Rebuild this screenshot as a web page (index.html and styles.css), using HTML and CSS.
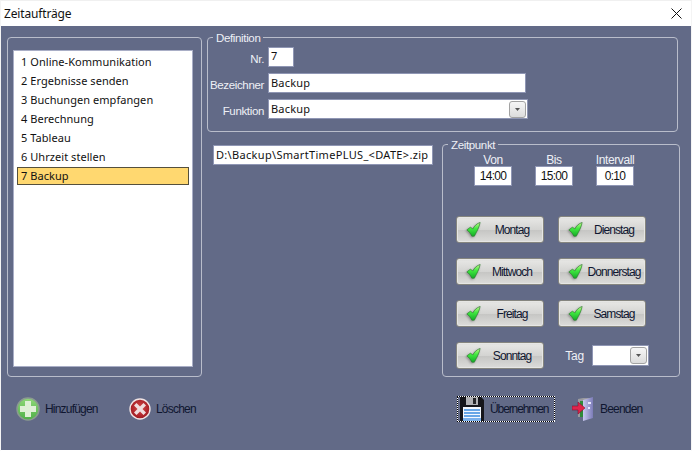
FILE: index.html
```html
<!DOCTYPE html>
<html lang="de">
<head>
<meta charset="utf-8">
<title>Zeitaufträge</title>
<link rel="stylesheet" href="styles.css">
</head>
<body>
<svg class="defs" width="0" height="0">
  <defs>
    <linearGradient id="gCheck" x1="0" y1="0" x2="0" y2="1"><stop offset="0" stop-color="#c0f888"/><stop offset="0.45" stop-color="#40e840"/><stop offset="1" stop-color="#14ac28"/></linearGradient>
    <linearGradient id="gPlus" x1="0" y1="0" x2="0" y2="1"><stop offset="0" stop-color="#8fd878"/><stop offset="1" stop-color="#4fb048"/></linearGradient>
    <radialGradient id="gDel" cx="0.5" cy="0.45" r="0.6"><stop offset="0" stop-color="#d84848"/><stop offset="1" stop-color="#98141c"/></radialGradient>
    <linearGradient id="gDoor" x1="0" y1="0" x2="1" y2="0"><stop offset="0" stop-color="#c8c8f0"/><stop offset="1" stop-color="#7c7cb8"/></linearGradient>
    <symbol id="check" viewBox="0 0 18 18">
      <path d="M1 9.5 L5.5 6 L8 8.5 C10 5 12.5 2 17 0.5 C16 6 13 11.5 10 17 L7 17 C5.5 14 3.5 11 1 9.5 Z" fill="url(#gCheck)" stroke="#2f7a30" stroke-width="0.8" stroke-linejoin="round"/>
    </symbol>
  </defs>
</svg>
<div class="window">
  <header class="titlebar">
    <span class="title">Zeitaufträge</span>
    <svg class="close" width="11" height="11" viewBox="0 0 11 11"><path d="M0.5 0.5 L10.5 10.5 M10.5 0.5 L0.5 10.5" stroke="#111" stroke-width="1" fill="none"/></svg>
  </header>
  <main class="main">
    <div class="top">
      <section class="group group-list">
        <ul class="list">
          <li class="item">1 Online-Kommunikation</li>
          <li class="item">2 Ergebnisse senden</li>
          <li class="item">3 Buchungen empfangen</li>
          <li class="item">4 Berechnung</li>
          <li class="item">5 Tableau</li>
          <li class="item">6 Uhrzeit stellen</li>
          <li class="item selected">7 Backup</li>
        </ul>
      </section>
      <div class="right">
        <section class="group group-def">
          <span class="legend legend-def">Definition</span>
          <div class="row row-nr">
            <span class="label">Nr.</span>
            <div class="field field-nr">7</div>
          </div>
          <div class="row row-bez">
            <span class="label">Bezeichner</span>
            <div class="field field-bez">Backup</div>
          </div>
          <div class="row row-fun">
            <span class="label">Funktion</span>
            <div class="field combo combo-fun">Backup
              <span class="drop"><svg width="5" height="3" viewBox="0 0 5 3"><path d="M0 0 H5 L2.5 3 Z" fill="#555"/></svg></span>
            </div>
          </div>
        </section>
        <div class="lower">
          <div class="field field-path">D:\Backup\SmartTimePLUS_&lt;DATE&gt;.zip</div>
          <section class="group group-time">
            <span class="legend legend-time">Zeitpunkt</span>
            <div class="times">
              <div class="time"><span class="time-label">Von</span><div class="field field-time">14:00</div></div>
              <div class="time"><span class="time-label">Bis</span><div class="field field-time">15:00</div></div>
              <div class="time"><span class="time-label">Intervall</span><div class="field field-time">0:10</div></div>
            </div>
            <div class="days">
              <button class="day"><svg class="tick"><use href="#check"/></svg><span class="day-text">Montag</span></button>
              <button class="day"><svg class="tick"><use href="#check"/></svg><span class="day-text">Dienstag</span></button>
              <button class="day"><svg class="tick"><use href="#check"/></svg><span class="day-text">Mittwoch</span></button>
              <button class="day"><svg class="tick"><use href="#check"/></svg><span class="day-text">Donnerstag</span></button>
              <button class="day"><svg class="tick"><use href="#check"/></svg><span class="day-text">Freitag</span></button>
              <button class="day"><svg class="tick"><use href="#check"/></svg><span class="day-text">Samstag</span></button>
              <button class="day"><svg class="tick"><use href="#check"/></svg><span class="day-text">Sonntag</span></button>
              <div class="tag">
                <span class="tag-label">Tag</span>
                <div class="field combo combo-tag"><span class="drop"><svg width="5" height="3" viewBox="0 0 5 3"><path d="M0 0 H5 L2.5 3 Z" fill="#555"/></svg></span></div>
              </div>
            </div>
          </section>
        </div>
      </div>
    </div>
    <footer class="actions">
      <div class="action act-add">
        <svg width="24" height="24" viewBox="0 0 24 24"><circle cx="12" cy="12" r="11" fill="url(#gPlus)" stroke="#8a9a90" stroke-width="1.5"/><path d="M9 4 H15 V9 H20 V15 H15 V20 H9 V15 H4 V9 H9 Z" fill="#dff0d6"/></svg>
        <span>Hinzufügen</span>
      </div>
      <div class="action act-del">
        <svg width="22" height="22" viewBox="0 0 22 22"><circle cx="11" cy="11" r="10" fill="url(#gDel)" stroke="#f0e4e4" stroke-width="1.4"/><path d="M7.5 5 L11 8.5 L14.5 5 L17 7.5 L13.5 11 L17 14.5 L14.5 17 L11 13.5 L7.5 17 L5 14.5 L8.5 11 L5 7.5 Z" fill="#f0dcdc"/></svg>
        <span>Löschen</span>
      </div>
      <div class="action act-save">
        <svg width="24" height="24" viewBox="0 0 24 24"><path d="M0 0 H21 L24 3 V24 H0 Z" fill="#16161c"/><rect x="6" y="0" width="12" height="8" fill="#b0b0b4"/><rect x="13" y="1" width="3" height="6" fill="#26262a"/><rect x="3" y="10" width="18" height="14" fill="#f4f8ff"/><path d="M4 13 H20 M4 16 H20 M4 19 H20" stroke="#3a8ae0" stroke-width="1.4"/><rect x="3" y="21" width="18" height="3" fill="#7ab0ec"/></svg>
        <span class="save-text">Übernehmen</span>
      </div>
      <div class="action act-exit">
        <svg width="24" height="24" viewBox="0 0 24 24"><path d="M6 2 L11 1 H20 V20 H6 Z" fill="#9a9a9e"/><rect x="8" y="4" width="4" height="16" fill="#2f8a3a"/><path d="M11 3 L21 0 V21 L11 24 Z" fill="url(#gDoor)"/><rect x="16" y="5" width="3" height="2" fill="#e8e8ff"/><rect x="16" y="10" width="2" height="2" fill="#e8e8ff"/><path d="M0 9 H6 V5 L13 11 L6 17 V13 H0 Z" fill="#e0244c" stroke="#801030" stroke-width="0.6"/></svg>
        <span>Beenden</span>
      </div>
    </footer>
  </main>
</div>
</body>
</html>
```

FILE: styles.css
```css
* { box-sizing: border-box; }
html, body { margin: 0; padding: 0; }
body { width: 692px; height: 451px; overflow: hidden; background: #fff; font-family: "Liberation Sans", Arial, sans-serif; }
.defs { position: absolute; }

.window { width: 692px; height: 451px; display: flex; flex-direction: column; border: 1px solid #f4f4f4; border-bottom-color: #fff; border-top-color: #f0f0f0; }
.titlebar { height: 25px; flex: none; background: #fff; display: flex; align-items: center; justify-content: space-between; padding: 0 4px 0 3px; }
.title { font: 12px "Noto Sans", sans-serif; color: #111; letter-spacing: -0.15px; }
.close { display: block; margin-right: 5px; }

.main { flex: 1; background: #626a87; padding: 11px 0 0 6px; display: flex; flex-direction: column; }
.top { display: flex; gap: 5px; }
.group { position: relative; border: 1px solid #b9bdcb; border-radius: 4px; }
.legend { position: absolute; top: -7px; background: #626a87; color: #eef0f6; font-size: 11.5px; line-height: 14px; padding: 0 3px; letter-spacing: -0.35px; }

.group-list { width: 195px; height: 340px; padding: 12px 8px 9px 5px; }
.list { list-style: none; margin: 0; height: 100%; padding: 2px 3px 0 3px; background: #fff; border: 1px solid #a9aec6; }
.item { height: 18px; margin-bottom: 1px; padding: 0 0 0 3px; border: 1px solid transparent; font: 11px/15px "Noto Sans", sans-serif; color: #111; letter-spacing: 0.05px; }
.item.selected { background: #ffd870; border-color: #55503c; }

.right { width: 473px; }
.group-def { width: 471px; height: 95px; padding-top: 9px; }
.legend-def { left: 5px; }
.row { display: flex; align-items: center; }
.row-bez { margin-top: 6px; }
.row-fun { margin-top: 6px; }
.label { width: 56px; text-align: right; color: #eef0f6; font-size: 11.5px; letter-spacing: -0.35px; margin-right: 4px; margin-top: 3px; white-space: nowrap; }
.field { background: #fff; border: 1px solid #8f96b4; color: #111; font: 11px/17px "Noto Sans", sans-serif; letter-spacing: 0.2px; padding-left: 2px; white-space: nowrap; }
.field-nr { width: 26px; height: 20px; line-height: 15px; }
.field-bez { width: 258px; height: 20px; }
.combo { position: relative; }
.combo-fun { width: 260px; height: 20px; }
.drop { position: absolute; right: 1px; top: 1px; width: 17px; height: 17px; border: 1px solid #a2a2a2; border-radius: 3px; background: linear-gradient(#f6f6f6, #dcdcdc); display: flex; align-items: center; justify-content: center; }
.drop svg { display: block; }

.lower { display: flex; align-items: flex-start; margin-top: 12px; }
.field-path { width: 220px; height: 20px; margin: 1px 0 0 6px; letter-spacing: 0.32px; }
.group-time { width: 238px; height: 233px; margin-left: 9px; padding: 9px 0 0 13px; }
.legend-time { left: 5px; }
.times { display: flex; margin-left: 18px; gap: 23px; }
.time { width: 38px; display: flex; flex-direction: column; align-items: center; }
.time-label { color: #eef0f6; font-size: 12px; line-height: 12px; letter-spacing: -0.4px; white-space: nowrap; }
.field-time { width: 38px; height: 20px; text-align: center; padding: 0; font: 12px/18px "Liberation Sans", sans-serif; letter-spacing: -0.7px; }
.days { display: grid; grid-template-columns: 88px 88px; column-gap: 14px; row-gap: 15px; margin-top: 30px; }
.day { height: 27px; padding: 0; display: flex; align-items: center; position: relative; border: 1px solid #85857f; border-radius: 3px; box-shadow: inset 0 0 0 1px #e6e6e4; background: linear-gradient(#dedddb 0, #e4e4e2 10%, #d4d4d2 50%, #c6c6c4 53%, #dcdcda 100%); color: #0f1630; font: 12px "Liberation Sans", sans-serif; letter-spacing: -0.9px; }
.tick { width: 15px; height: 15px; margin: 0 2px 0 9px; flex: none; filter: drop-shadow(-1px 1px 1px rgba(50,50,50,.4)); }
.day-text { flex: 1; text-align: center; padding-right: 2px; }
.tag { display: flex; align-items: center; justify-content: flex-end; width: 91px; height: 27px; }
.tag-label { color: #eef0f6; font-size: 12px; letter-spacing: -0.2px; margin-right: 8px; }
.combo-tag { width: 57px; height: 21px; }

.actions { display: flex; align-items: center; margin-top: 19px; height: 26px; font: 12px "Liberation Sans", sans-serif; letter-spacing: -0.8px; color: #0f1630; }
.action { display: flex; align-items: center; }
.act-add { margin-left: 9px; gap: 5px; width: 113px; }
.act-del { gap: 5px; width: 328px; }
.act-save { width: 98px; height: 26px; padding-left: 3px; gap: 6px; background:
  repeating-linear-gradient(90deg, #000 0 1px, #fff 1px 2px) top / 100% 1px no-repeat,
  repeating-linear-gradient(90deg, #000 0 1px, #fff 1px 2px) bottom / 100% 1px no-repeat,
  repeating-linear-gradient(0deg, #000 0 1px, #fff 1px 2px) left / 1px 100% no-repeat,
  repeating-linear-gradient(0deg, #000 0 1px, #fff 1px 2px) right / 1px 100% no-repeat; }
.save-text { letter-spacing: -1.1px; }
.act-exit { margin-left: 17px; gap: 4px; }
```
